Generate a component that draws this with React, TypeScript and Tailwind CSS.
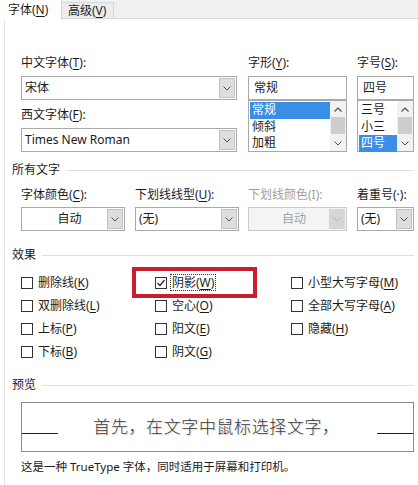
import React from 'react';

const U = ({ c }: { c: string }) => <span className="underline underline-offset-2">{c}</span>;

const Chevron = ({ color = '#505050' }: { color?: string }) => (
  <svg width="8" height="5" viewBox="0 0 8 5" fill="none">
    <path d="M0.5 0.5 L4 4 L7.5 0.5" stroke={color} strokeWidth="1" />
  </svg>
);

const Up = () => (
  <svg width="8" height="5" viewBox="0 0 8 5" fill="none">
    <path d="M0.5 4.5 L4 1 L7.5 4.5" stroke="#505050" strokeWidth="1.2" />
  </svg>
);

const Combo = ({
  w,
  text,
  center = false,
  disabled = false,
  arrow = true,
}: {
  w: string;
  text: string;
  center?: boolean;
  disabled?: boolean;
  arrow?: boolean;
}) => (
  <div
    className={`${w} h-[24px] flex border ${
      disabled ? 'border-[#cccccc] bg-[#f4f4f4] text-[#a2a2a2]' : 'border-[#a9a9a9] bg-white'
    }`}
  >
    <div className={`flex-1 flex items-center px-[3px] ${center ? 'justify-center pl-[14px]' : ''}`}>{text}</div>
    {arrow && (
      <div
        className={`w-[16px] m-px flex items-center justify-center ${
          disabled ? 'bg-[#d6d6d6]' : 'bg-[#dedede] border border-[#c2c2c2]'
        }`}
      >
        <Chevron color={disabled ? '#b0b0b0' : '#505050'} />
      </div>
    )}
  </div>
);

const ListBox = ({ w, items, sel }: { w: string; items: string[]; sel: number }) => (
  <div className={`${w} h-[52px] border border-[#a9a9a9] bg-white flex`}>
    <div className="flex-1 pt-[1px] pl-px">
      {items.map((it, i) => (
        <div
          key={it}
          className={`h-[16.5px] leading-[16.5px] px-[2px] ${i === sel ? 'bg-[#3a8ee6] text-white' : ''}`}
        >
          {it}
        </div>
      ))}
    </div>
    <div className="w-[16px] flex flex-col items-center bg-[#f2f2f2]">
      <div className="h-[16px] flex items-center justify-center">
        <Up />
      </div>
      <div className="w-[14px] flex-1 bg-[#cdcdcd] mb-[1px]" />
      <div className="h-[16px] flex items-center justify-center">
        <Chevron />
      </div>
    </div>
  </div>
);

const Section = ({ title }: { title: string }) => (
  <div className="h-[20px] flex items-center ml-[-9px]">
    <span className="pr-[6px]">{title}</span>
    <div className="flex-1 h-px bg-[#e0e0e0]" />
  </div>
);

const Check = ({ label, checked = false, focus = false }: { label: React.ReactNode; checked?: boolean; focus?: boolean }) => (
  <div className="flex items-center h-[23px]">
    <div className="w-[12px] h-[12px] border border-[#333333] bg-white flex items-center justify-center">
      {checked && (
        <svg width="10" height="10" viewBox="0 0 10 10" fill="none">
          <path d="M1.5 5 L4 7.5 L8.5 2" stroke="#222" strokeWidth="1.2" />
        </svg>
      )}
    </div>
    <span className={`ml-[4px] leading-[15px] px-px ${focus ? 'outline-1 outline-dotted outline-[#333]' : ''}`}>
      {label}
    </span>
  </div>
);

export default function App() {
  return (
    <div className="w-[418px] h-[485px] bg-white relative overflow-hidden text-[12px] text-[#1b1b1b] font-['Noto_Sans','Noto_Sans_CJK_SC',sans-serif]">
      {/* tabs */}
      <div className="h-[19px] flex bg-[#f0f0f0] border-b border-[#d9d9d9]">
        <div className="w-[62px] bg-white h-[20px] flex items-center pl-[8px] border-r border-[#d9d9d9]">
          字体(<U c="N" />)
        </div>
        <div className="w-[52px] mt-[2px] flex items-center pl-[6px] bg-[#ececec] border-r border-t border-[#d9d9d9]">
          高级(<U c="V" />)
        </div>
      </div>

      <div className="h-[466px] ml-[4px] border-l border-[#e3e3e3] pl-[16px] pr-[4px]">
        {/* font rows */}
        <div className="flex pt-[34px]">
          <div className="w-[216px]">
            <div className="h-[20px] leading-[20px]">
              中文字体(<U c="T" />):
            </div>
            <div className="mt-[3px]">
              <Combo w="w-[216px]" text="宋体" />
            </div>
            <div className="h-[20px] leading-[20px] mt-[5px]">
              西文字体(<U c="F" />):
            </div>
            <div className="mt-[3px]">
              <Combo w="w-[216px]" text="Times New Roman" />
            </div>
          </div>
          <div className="w-[99px] ml-[11px]">
            <div className="h-[20px] leading-[20px]">
              字形(<U c="Y" />):
            </div>
            <div className="mt-[3px] w-[99px] h-[24px] border border-[#a9a9a9] flex items-center px-[5px]">常规</div>
            <ListBox w="w-[99px]" items={['常规', '倾斜', '加粗']} sel={0} />
          </div>
          <div className="w-[57px] ml-[10px]">
            <div className="h-[20px] leading-[20px]">
              字号(<U c="S" />):
            </div>
            <div className="mt-[3px] w-[57px] h-[24px] border border-[#a9a9a9] flex items-center px-[5px]">四号</div>
            <ListBox w="w-[57px]" items={['三号', '小三', '四号']} sel={2} />
          </div>
        </div>

        {/* all text */}
        <div className="mt-[8px]">
          <Section title="所有文字" />
        </div>
        <div className="flex mt-[5px]">
          <div className="w-[104px]">
            <div className="h-[20px] leading-[20px]">
              字体颜色(<U c="C" />):
            </div>
            <div className="mt-[2px]">
              <Combo w="w-[104px]" text="自动" center />
            </div>
          </div>
          <div className="w-[104px] ml-[10px]">
            <div className="h-[20px] leading-[20px] whitespace-nowrap">
              下划线线型(<U c="U" />):
            </div>
            <div className="mt-[2px]">
              <Combo w="w-[104px]" text="(无)" />
            </div>
          </div>
          <div className="w-[99px] ml-[9px]">
            <div className="h-[20px] leading-[20px] text-[#a0a0a0] whitespace-nowrap">下划线颜色(I):</div>
            <div className="mt-[2px]">
              <Combo w="w-[99px]" text="自动" center disabled />
            </div>
          </div>
          <div className="w-[57px] ml-[10px]">
            <div className="h-[20px] leading-[20px] whitespace-nowrap">着重号(·):</div>
            <div className="mt-[2px]">
              <Combo w="w-[57px]" text="(无)" />
            </div>
          </div>
        </div>

        {/* effects */}
        <div className="mt-[14px]">
          <Section title="效果" />
        </div>
        <div className="flex mt-[6px]">
          <div className="w-[134px]">
            <Check label={<>删除线(<U c="K" />)</>} />
            <Check label={<>双删除线(<U c="L" />)</>} />
            <Check label={<>上标(<U c="P" />)</>} />
            <Check label={<>下标(<U c="B" />)</>} />
          </div>
          <div className="w-[136px]">
            <Check label={<>阴影(<U c="W" />)</>} checked focus />
            <Check label={<>空心(<U c="O" />)</>} />
            <Check label={<>阳文(<U c="E" />)</>} />
            <Check label={<>阴文(<U c="G" />)</>} />
          </div>
          <div>
            <Check label={<>小型大写字母(<U c="M" />)</>} />
            <Check label={<>全部大写字母(<U c="A" />)</>} />
            <Check label={<>隐藏(<U c="H" />)</>} />
          </div>
        </div>

        {/* preview */}
        <div className="mt-[12px]">
          <Section title="预览" />
        </div>
        <div className="mt-[7px] h-[50px] border border-[#8a8a8a] flex items-center">
          <div className="w-[36px] h-px bg-[#222] mt-[12px]" />
          <div className="flex-1 text-center text-[17px] font-light text-[#3a3a3a] tracking-[0.6px] [text-shadow:1px_1px_1px_#d4d4d4] pr-[2px]">
            首先，在文字中鼠标选择文字，
          </div>
          <div className="w-[36px] h-px bg-[#222] mt-[12px]" />
        </div>
        <div className="mt-[5px] h-[20px] leading-[20px] text-[11.5px]">
          这是一种 TrueType 字体，同时适用于屏幕和打印机。
        </div>
      </div>

      {/* annotation */}
      <div className="absolute left-[132px] top-[267px] w-[125px] h-[31px] border-[4px] border-[#c71f2d]" />
    </div>
  );
}
